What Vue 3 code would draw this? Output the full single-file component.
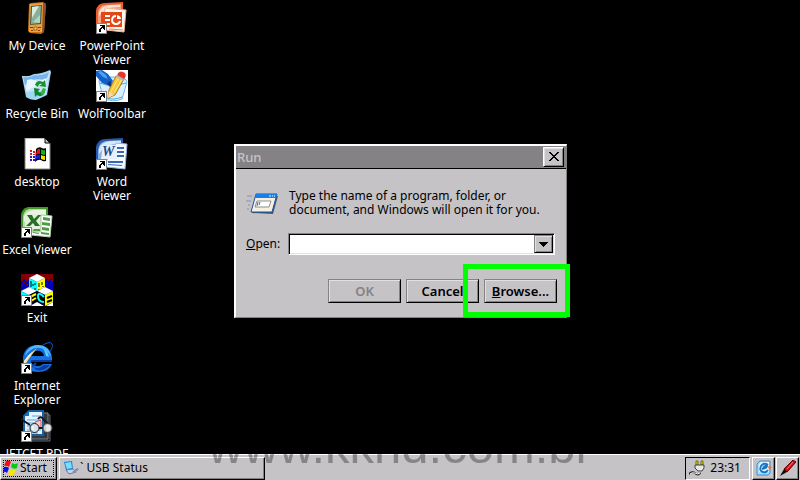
<script setup>
/**
 * @fileoverview Windows CE desktop: shortcuts, Run dialog and taskbar.
 */
import { ref } from 'vue'

/**
 * Icons on a 32x32 grid.
 * paths: [d, fill, stroke, stroke width], texts: [text, x, y, size, fill]
 */
const ICONS = {
  device: {
    paths: [
      ['M8 2L10 1L22 0L25 2L23 30L20 32L9 31L7 29Z', '#c87018'],
      ['M9 2L22 1L22 30L8 30Z', '#f0a040'],
      ['M22 1L25 2L23 30L21 31Z', '#8c5428'],
      ['M10 4L21 3L20 22L9 23Z', '#405848'],
      ['M11 5L20 4L19 21L10 22Z', '#88b098'],
      ['M11 5L18 4L11 16Z', '#d8ece0'],
      ['M12 20L19 13L19 21Z', '#b4d4bc'],
      ['M9 25H12V26H9ZM17 25H20V26H17ZM10 28H12V29H10ZM17 28H19V29H17Z', '#7c4010'],
      ['M13 25H16V28H13Z', '#ffe070', '#a05818', 1],
    ],
  },
  recycle: {
    paths: [
      ['M1 6Q8 7 13 4Q20 4 29 0L30 2L26 25Q20 28 15 30Q9 30 5 27Z', '#a8d4f4'],
      ['M1 6Q9 8 15 5Q21 5 29 1L25 24Q17 28 7 25Z', '#c8e4fc'],
      ['M2 7Q9 8 14 5Q20 6 28 2L25 11Q15 6 4 15Z', '#78b4ec'],
      ['M6 10Q13 8 16 12Q20 10 26 8L24 14Q14 16 5 21Z', '#e8f6ff'],
      ['M5 23Q14 19 24 22L23 26Q14 31 6 27Z', '#9cd8f4'],
      ['M14 15Q16 9 22 12L24 10L25 17L18 16L21 14Q18 13 17 17Z', '#18942c'],
      ['M13 18L19 19L17 21Q19 24 22 21L24 22Q21 28 16 25L14 27Z', '#108028'],
      ['M22 18L25 19L23 24L20 25L20 22Z', '#30b440'],
    ],
  },
  desktop: {
    paths: [
      ['M4 0H24L29 5V31H4Z', '#ffffff', '#848284', 1],
      ['M24 0V5H29Z', '#c6c3c6', '#000000', 1],
      ['M15 11Q18 8 21 10Q23 11 25 10V23Q22 24 20 22Q17 21 14 24Z', '#000000'],
      ['M16 12Q18 10 19 11V16Q17 15 15 17Z', '#e01818'],
      ['M20 11Q22 13 24 12V17Q22 17 20 16Z', '#18b018'],
      ['M15 18Q17 16 19 17V21Q17 20 15 21Z', '#1818e0'],
      ['M20 17Q22 18 24 18V22Q22 22 20 21Z', '#f0e000'],
      ['M9 12H11V14H9ZM12 13H14V15H12ZM9 15H11V17H9ZM12 16H14V17H12Z', '#e01818'],
      ['M9 18H11V20H9ZM12 18H14V20H12ZM9 21H11V23H9ZM12 21H14V23H12Z', '#1818e0'],
    ],
  },
  excel: {
    paths: [
      ['M0 10Q0 3 7 1H27V27H0Z', '#429828'],
      ['M2 12Q2 5 8 3H25V26H2Z', '#b8d8a8'],
      ['M3 10Q6 4 14 4H25V9Q12 7 3 16Z', '#e8f4e0'],
      ['M20 9L31 10L29 31L10 29L11 26H20Z', '#ffffff', '#b8ccb0', 1],
      ['M22 11L29 12V15L22 14ZM21 16L29 17V20L21 19ZM21 21L28 22V25L21 24ZM20 26L28 27V29L20 28ZM13 23H19V25H12ZM12 26L18 27V28L12 27Z', '#509c48'],
      ['M4 8H19V23H4Z', '#e4f0dc'],
      ['M6 9H11L13 13L17 9H20L15 15L19 20H14L12 17L9 20H5L10 15Z', '#287028'],
    ],
  },
  exit: {
    paths: [
      ['M0 0H32V32H0Z', '#0000b8'],
      ['M0 0H32V5H0Z', '#840000'],
      ['M0 5H2V7H0ZM4 5H6V7H4ZM2 8H4V9H2ZM26 5H28V7H26ZM30 6H32V8H30ZM25 9H27V10H25ZM5 10H7V11H5ZM29 11H30V12H29ZM1 11H2V12H1Z', '#840000'],
      ['M16 0L24 4L16 8L8 4Z', '#ffffff'],
      ['M8 4L16 8V17L8 13Z', '#00ffff'],
      ['M16 8L24 4V13L16 17Z', '#ffff00'],
      ['M10 7V13M14 9V11M14 14V16M12 10V12', 'none', '#000000', 1],
      ['M18 9V13M21 8V11M18 15V16M22 12V13', 'none', '#000000', 1],
      ['M8 13L16 17L8 21L0 17ZM24 13L32 17L24 21L16 17Z', '#ffffff'],
      ['M0 17L8 21V32H0Z', '#00ffff'],
      ['M8 21L16 17V28L8 32Z', '#000000'],
      ['M9 23L15 20M10 27L15 24', 'none', '#ffff00', 2],
      ['M16 17L24 21V32L16 28Z', '#000000'],
      ['M24 21L32 17V28L24 32Z', '#ffff00'],
      ['M9 32L16 28L23 32ZM25 32L32 28V32Z', '#ffffff'],
      ['M23 23Q17 17 17 22Q17 28 23 28', 'none', '#00ffff', 2],
      ['M26 24L31 22M26 28L31 26', 'none', '#000000', 2],
    ],
  },
  explorer: {
    paths: [
      ['M19 5Q29 -2 31 2Q33 6 26 13', 'none', '#1858c8', 1],
      ['M17 3C7 3 2 9 2 17C2 26 9 30 17 30C24 30 29 27 31 22H22C18 26 11 24 10 20H31C32 9 26 3 17 3ZM10 14C12 7 22 7 23 14Z', '#1870e0'],
      ['M17 3C10 3 5 8 4 14Q9 7 14 6Q24 4 30 15Q29 4 17 3Z', '#50b8ff'],
      ['M10 20H31V18H10ZM13 25Q18 28 23 23L29 23Q23 30 15 28Z', '#0838a0'],
      ['M2 25Q-1 30 3 29Q8 28 15 21', 'none', '#184898', 2],
      ['M1 23Q7 13 16 6Q8 16 2 26Z', '#f0d880'],
      ['M3 19Q7 13 12 9Q7 16 3 21Z', '#ffffff'],
      ['M22 6Q27 9 28 15L25 14Q24 9 22 6Z', '#58d0ff'],
    ],
  },
  pdf: {
    paths: [
      ['M11 5H29V31H9Z', '#101418', '#606870', 1],
      ['M8 3H27V29H8Z', '#303840', '#808890', 1],
      ['M8 1H22V25H3V6Z', '#e4f4ff', '#1860a0', 2],
      ['M3 6H8V1Z', '#1870b8'],
      ['M11 6H20M6 10H20M6 13H20M6 16H19M6 20H20M6 23H17', 'none', '#58a0d8', 1],
      ['M14 12L20 10V18L14 19Z', '#f8c8c8', '#d85058', 1],
      ['M0 9L9 15M17 9Q20 5 23 10L29 15M18 18L22 18', 'none', '#181818', 2],
      ['M9 18A4.5 4.5 0 1 0 18 18A4.5 4.5 0 1 0 9 18Z', '#d8e4ec', '#181818', 1],
      ['M22 18A4.5 4.5 0 1 0 31 18A4.5 4.5 0 1 0 22 18Z', '#d0d0d0', '#404040', 1],
      ['M26 15V21M28 15V21M12 16V20', 'none', '#ffffff', 1],
    ],
  },
  powerpoint: {
    paths: [
      ['M0 9Q1 1 9 1L27 0V7H9V30H0Z', '#e86030'],
      ['M2 11Q3 3 10 3L25 2V7H9L8 26H2Z', '#f8a080'],
      ['M3 10Q5 4 14 3H24V5Q10 4 3 14Z', '#ffe0d0'],
      ['M9 6L30 8L28 30L10 28V24H8Z', '#fff4ec', '#f0b898', 1],
      ['M5 10H26V25H5Z', '#e04818'],
      ['M9 13H14V15H9ZM9 17H14V19H9ZM9 21H14V23H9Z', '#ffffff'],
      ['M20 14A4 4 0 1 0 24 19', 'none', '#ffffff', 2],
      ['M21 13V17H25Q25 14 21 13Z', '#ffffff'],
      ['M13 27L27 28', 'none', '#e88058', 1],
    ],
  },
  wolf: {
    paths: [
      ['M0 0H32V32H0Z', '#ffffff'],
      ['M3 11Q3 6 16 7Q31 7 31 12L26 29Q17 33 7 28Z', '#d8f0fc', '#70b8e8', 1],
      ['M4 13Q15 18 30 13M7 27Q17 31 26 27', 'none', '#58a8e0', 1],
      ['M0 1L6 0L12 4L17 11L14 16L6 13L0 6Z', '#1060c8'],
      ['M2 2L5 1L10 5L12 9L7 7Z', '#50a0f0'],
      ['M11 13L14 11L17 16L16 20Z', '#083888'],
      ['M20 6L28 9L19 25L12 28L13 20Z', '#f8c838', '#a87820', 1],
      ['M23 7L15 22M26 9L18 23', 'none', '#ffe890', 1],
      ['M13 21L18 25L12 28Z', '#f8dca8'],
      ['M22 3Q25 0 29 3Q31 6 28 9L21 6Z', '#e83828'],
      ['M21 5L28 9L27 11L20 7Z', '#b8b8b8'],
    ],
  },
  word: {
    paths: [
      ['M0 9Q2 1 9 1L27 0V27H0Z', '#2858a8'],
      ['M2 12Q3 4 10 3L25 2V26H2Z', '#88b0e0'],
      ['M3 11Q5 4 14 3H25V6Q11 4 3 16Z', '#d8e8fc'],
      ['M20 5L31 6L29 31L10 29L11 22Z', '#f4f8ff', '#98b4dc', 1],
      ['M21 9H28V11H21ZM21 13H28V15H21ZM21 17H28V19H21ZM12 23H27V25H12ZM12 26L26 27V28L12 27Z', '#3868b0'],
      ['M7 7H21V21H5Z', '#e8f0fc'],
    ],
    texts: [['W', 6, 18, 14, '#204888']],
  },
}

const columns = [
  [
    { label: 'My Device', icon: 'device' },
    { label: 'Recycle Bin', icon: 'recycle' },
    { label: 'desktop', icon: 'desktop' },
    { label: 'Excel Viewer', icon: 'excel', shortcut: true },
    { label: 'Exit', icon: 'exit', shortcut: true },
    { label: 'Internet\nExplorer', icon: 'explorer', shortcut: true },
    { label: 'JETCET PDF', icon: 'pdf', shortcut: true },
  ],
  [
    { label: 'PowerPoint\nViewer', icon: 'powerpoint', shortcut: true },
    { label: 'WolfToolbar', icon: 'wolf', shortcut: true },
    { label: 'Word\nViewer', icon: 'word', shortcut: true },
  ],
]

const command = ref('')
</script>

<template>
  <div class="screen">
    <main class="desktop">
      <ul v-for="(items, c) in columns" :key="c" class="column">
        <li v-for="item in items" :key="item.label">
          <a class="shortcut" href="#">
            <svg class="shortcut-icon" viewBox="0 0 32 32" aria-hidden="true">
              <path
                v-for="(p, i) in ICONS[item.icon].paths"
                :key="i"
                :d="p[0]"
                :fill="p[1]"
                :stroke="p[2] ?? 'none'"
                :stroke-width="p[3] ?? 0"
              />
              <text
                v-for="t in ICONS[item.icon].texts"
                :key="t[0]"
                class="icon-letter"
                :x="t[1]"
                :y="t[2]"
                :font-size="t[3]"
                :fill="t[4]"
              >{{ t[0] }}</text>
              <g v-if="item.shortcut" shape-rendering="crispEdges">
                <path d="M0 21H11V32H0Z" fill="#848284" />
                <path d="M1 22H10V31H1Z" fill="#fff" />
                <path d="M4 23H9V28H8V27H7V26H6V27H5V30H3V27H4V26H5V25H6V24H4Z" fill="#000" />
              </g>
            </svg>
            <span class="shortcut-label">{{ item.label }}</span>
          </a>
        </li>
      </ul>

      <section class="dialog" role="dialog" aria-labelledby="run-title">
        <header class="title-bar">
          <h1 id="run-title">Run</h1>
          <button class="raised close" type="button" aria-label="Close">
            <svg viewBox="0 0 10 10" shape-rendering="crispEdges">
              <path d="M0 0H2V1H3V2H4V3H6V2H7V1H8V0H10V1H9V2H8V3H7V4H6V5H7V6H8V7H9V8H10V9H8V8H7V7H6V6H4V7H3V8H2V9H0V8H1V7H2V6H3V5H4V4H3V3H2V2H1V1H0Z" />
            </svg>
          </button>
        </header>

        <form class="dialog-body" @submit.prevent>
          <div class="intro">
            <svg class="run-icon" viewBox="0 0 32 22" aria-hidden="true">
              <path d="M1 3H6M0 8H5M2 12H4M1 16H3" stroke="#8494a4" fill="none" />
              <path d="M11 2L32 3L27 21L6 20Z" fill="#485868" />
              <path d="M10 1H31L26 19H5Z" fill="#f4f0e4" stroke="#1850a8" />
              <path d="M10 1H31L30 5H9Z" fill="#1880e8" />
              <path d="M23 3H25M26 3H27M28 3H29" stroke="#fff" fill="none" />
              <path d="M11 8H25L23 14H9Z" fill="#fff" stroke="#909090" />
              <path d="M12 9L11 13M14 9L13 12" stroke="#606870" fill="none" />
            </svg>
            <p>Type the name of a program, folder, or document, and Windows will open it for you.</p>
          </div>

          <div class="field">
            <label for="command"><u>O</u>pen:</label>
            <div class="combo">
              <input id="command" v-model="command" type="text" autocomplete="off">
              <button class="raised drop" type="button" aria-label="Show recent commands">
                <svg viewBox="0 0 9 5" shape-rendering="crispEdges">
                  <path d="M0 0H9V1H8V2H7V3H6V4H5V5H4V4H3V3H2V2H1V1H0Z" />
                </svg>
              </button>
            </div>
          </div>

          <div class="actions">
            <button class="raised action" type="submit" disabled>OK</button>
            <button class="raised action" type="button">Cancel</button>
            <div class="marked">
              <button class="raised action" type="button"><span><u>B</u>rowse...</span></button>
            </div>
          </div>
        </form>
      </section>
    </main>

    <footer class="taskbar">
      <button class="raised start" type="button">
        <svg viewBox="0 0 16 16" aria-hidden="true">
          <path d="M3 1Q6 -1 8 2L6 7Q4 5 1 6Z" fill="#f01010" />
          <path d="M9 3Q12 5 15 3L14 8Q11 10 8 7Z" fill="#08c818" />
          <path d="M1 7Q4 6 6 8L4 13Q2 11 0 12Z" fill="#1010e0" />
          <path d="M7 9Q10 11 13 9L11 14Q8 17 5 14Z" fill="#f8e800" />
        </svg>
        <span>Start</span>
      </button>
      <button class="raised task" type="button">
        <svg viewBox="0 0 16 16" aria-hidden="true">
          <path d="M1 2L9 1L10 9L3 10Z" fill="#2080d8" />
          <path d="M2 3L8 2L9 8L4 9Z" fill="#78e0ff" />
          <path d="M3 10L10 9L13 12L6 14Z" fill="#c8d4e8" stroke="#6878a0" />
          <path d="M9 12L14 8L16 9L12 13Z" fill="#8090b0" />
        </svg>
        <span>` USB Status</span>
      </button>

      <div class="tray">
        <svg viewBox="0 0 16 16" aria-hidden="true">
          <path d="M7 1H9V5H7ZM12 1H14V5H12Z" fill="#e8d800" stroke="#707000" />
          <path d="M6 5H15V8L13 11H9L6 8Z" fill="#e8e8e8" stroke="#404040" />
          <path d="M11 11V13Q9 16 6 13Q3 11 0 14" fill="none" stroke="#202020" stroke-width="2" />
          <path d="M11 11V13Q9 15 6 13Q3 12 1 14" fill="none" stroke="#fff" />
        </svg>
        <time>23:31</time>
      </div>
      <button class="raised tool" type="button" aria-label="Show desktop">
        <svg viewBox="0 0 16 16" aria-hidden="true">
          <path d="M4 1H14V13L12 15H1V4Z" fill="#a8dcf8" stroke="#3890d0" />
          <path d="M5 2H13V12H3V5Z" fill="#f0faff" />
          <path d="M12 5Q8 2 5 6Q3 11 7 12Q10 13 12 10M6 9Q11 8 11 6Q9 5 7 8" fill="none" stroke="#1878c8" stroke-width="2" />
          <path d="M12 6L16 7L13 10Z" fill="#f07028" />
        </svg>
      </button>
      <button class="raised tool" type="button" aria-label="Input panel">
        <svg viewBox="0 0 16 16" aria-hidden="true">
          <path d="M13 0L16 2L7 12L4 9Z" fill="#d01018" stroke="#600008" />
          <path d="M13 2L7 9" stroke="#ff7070" />
          <path d="M4 9L7 12L0 16Z" fill="#101010" />
        </svg>
      </button>
    </footer>

    <div class="watermark">www.kknd.com.br</div>
  </div>
</template>

<style>
body {
  margin: 0;
  background: #000;
}
</style>

<style scoped>
.screen {
  position: relative;
  display: flex;
  flex-direction: column;
  height: 100vh;
  overflow: hidden;
  background: #000;
  color: #000;
  font-family: "Noto Sans", "Open Sans", sans-serif;
  font-size: 12px;
  line-height: 14px;
}

button, input {
  box-sizing: border-box;
  margin: 0;
  padding: 0;
  border: 0;
  border-radius: 0;
  font: inherit;
  color: inherit;
}

svg { display: block; flex-shrink: 0; }

/* ─── Desktop ─────────────────────────────────── */

.desktop {
  position: relative;
  display: flex;
  flex: 1;
  gap: 1px;
  min-height: 0;
  overflow: hidden;
}

.column {
  width: 74px;
  margin: 0;
  padding: 0;
  list-style: none;
}

.column li { height: 68px; }

.shortcut {
  display: flex;
  flex-direction: column;
  align-items: center;
  gap: 5px;
  padding-top: 2px;
  color: #fff;
  text-align: center;
  text-decoration: none;
}

.shortcut-icon {
  width: 32px;
  height: 32px;
}

.shortcut-label { white-space: pre; }

.icon-letter {
  font-family: "Liberation Serif", serif;
  font-style: italic;
  font-weight: 700;
}

/* ─── Raised buttons ──────────────────────────── */

.raised {
  display: flex;
  align-items: center;
  justify-content: center;
  background: #c6c3c6;
  border: 1px solid;
  border-color: #848284 #000 #000 #848284;
  box-shadow: inset 1px 1px #e0e0e0, inset -1px -1px #848284;
}

/* ─── Run dialog ──────────────────────────────── */

.dialog {
  position: absolute;
  top: 144px;
  left: calc(50% - 166px);
  box-sizing: border-box;
  width: 333px;
  background: #c6c3c6;
  border: solid;
  border-width: 2px 1px 1px 2px;
  border-color: #fff #848284 #848284 #fff;
}

.title-bar {
  display: flex;
  align-items: center;
  justify-content: space-between;
  height: 22px;
  padding: 0 2px 0 1px;
  background: #848284;
  border-bottom: 1px solid #000;
}

.title-bar h1 {
  margin: 0;
  color: #c6c3c6;
  font-size: 13px;
  font-weight: 500;
}

.close {
  width: 21px;
  height: 20px;
  border-color: #fff #000 #000 #fff;
}
.close svg { width: 10px; height: 10px; }

.dialog-body { padding: 20px 9px 14px 10px; }

.intro {
  display: flex;
  gap: 11px;
}
.intro p { margin: 0; flex: 1; padding-right: 8px; }

.run-icon {
  width: 32px;
  height: 22px;
  margin-top: 4px;
}

.field {
  display: flex;
  align-items: center;
  margin-top: 16px;
}
.field label { width: 42px; }

.combo {
  display: flex;
  flex: 1;
  box-sizing: border-box;
  height: 22px;
  margin-right: 2px;
  background: #fff;
  border: 1px solid;
  border-color: #848284 #fff #fff #848284;
  box-shadow: inset 1px 1px #000, inset -1px -1px #e0e0e0;
  padding: 1px;
}
.combo input {
  flex: 1;
  min-width: 0;
  padding: 0 2px;
  background: transparent;
  outline: none;
}

.drop { width: 19px; }
.drop svg { width: 9px; height: 5px; }

.actions {
  display: flex;
  justify-content: flex-end;
  gap: 5px;
  margin-top: 24px;
}

.action {
  width: 73px;
  height: 24px;
  font-size: 13px;
  font-weight: 600;
}
.action:disabled { color: #848284; }

.marked { position: relative; }
.marked::after {
  content: "";
  position: absolute;
  inset: -15px -13px -14px -21px;
  border: 5px solid #00ff00;
  pointer-events: none;
}

/* ─── Taskbar ─────────────────────────────────── */

.taskbar {
  display: flex;
  align-items: center;
  box-sizing: border-box;
  height: 26px;
  padding: 1px 1px 0 0;
  background: #c6c3c6;
  border-top: 1px solid #fff;
}

.taskbar svg { width: 16px; height: 16px; }

.taskbar .raised {
  height: 23px;
  border-color: #fff #000 #000 #fff;
  box-shadow: inset -1px -1px #848284;
}

.taskbar .start {
  justify-content: flex-start;
  gap: 1px;
  width: 57px;
  padding-left: 2px;
  outline: 1px dotted #000;
  outline-offset: -4px;
}

.taskbar .task {
  justify-content: flex-start;
  gap: 1px;
  width: 206px;
  margin-left: 2px;
  padding-left: 3px;
}

.tray {
  display: flex;
  align-items: center;
  gap: 5px;
  box-sizing: border-box;
  height: 23px;
  margin: 0 1px 0 auto;
  padding: 0 8px 0 3px;
  border: 1px solid;
  border-color: #000 #fff #fff #000;
}

.taskbar .tool {
  width: 23px;
  margin-left: 1px;
}

/* ─── Watermark ───────────────────────────────── */

.watermark {
  position: absolute;
  left: 208px;
  bottom: 10px;
  color: rgba(0, 0, 0, 0.32);
  font-family: "Liberation Sans", Arial, sans-serif;
  font-size: 49px;
  line-height: 48px;
  white-space: nowrap;
  pointer-events: none;
}
</style>
